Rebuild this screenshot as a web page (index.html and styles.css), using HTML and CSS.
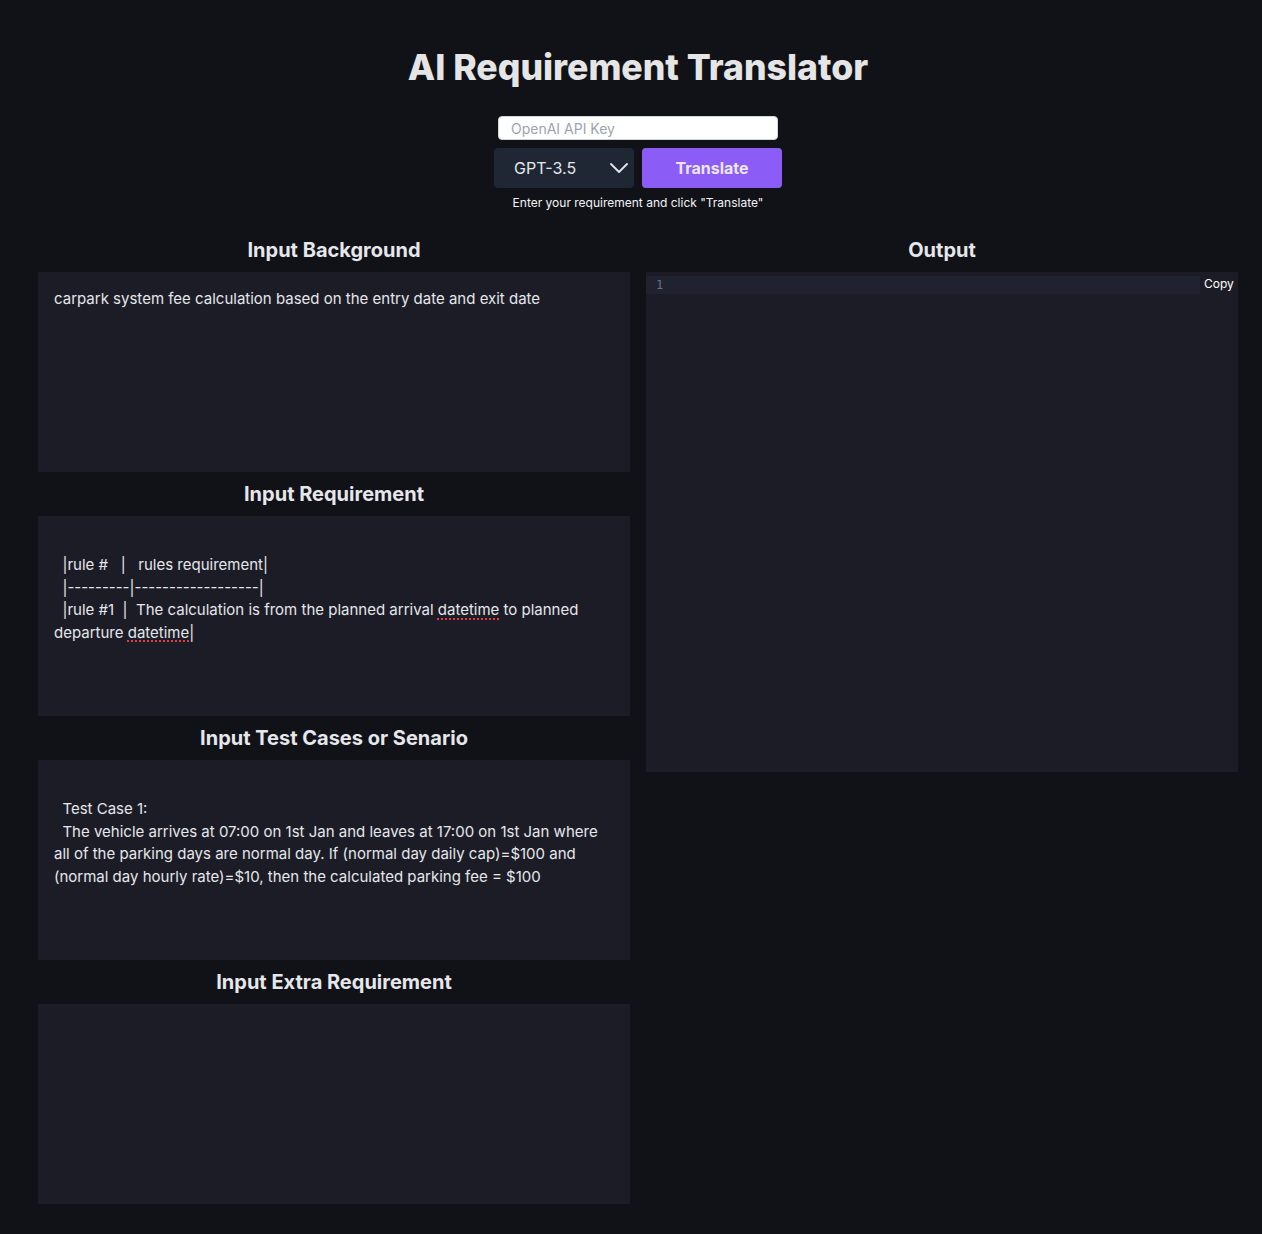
FILE: index.html
```html
<!DOCTYPE html>
<html lang="en">
<head>
<meta charset="utf-8">
<title>AI Requirement Translator</title>
<link rel="stylesheet" href="styles.css">
</head>
<body>
<div class="app">
  <header class="header">
    <h1 class="title">AI Requirement Translator</h1>
    <input class="api-key" type="text" placeholder="OpenAI API Key">
    <div class="controls">
      <div class="select">
        <span>GPT-3.5</span>
        <svg class="chevron" width="18" height="10" viewBox="0 0 18 10"><path d="M1 1l8 8 8-8" fill="none" stroke="#e5e7eb" stroke-width="1.8" stroke-linecap="round" stroke-linejoin="round"/></svg>
      </div>
      <button class="translate">Translate</button>
    </div>
    <p class="hint">Enter your requirement and click "Translate"</p>
  </header>
  <main class="columns">
    <section class="col">
      <h2 class="heading">Input Background</h2>
      <div class="box">carpark system fee calculation based on the entry date and exit date</div>
      <h2 class="heading">Input Requirement</h2>
      <div class="box">
  |rule #   |   rules requirement|
  |---------|------------------|
  |rule #1  |  The calculation is from the planned arrival <span class="spell">datetime</span> to planned departure <span class="spell">datetime</span>|</div>
      <h2 class="heading">Input Test Cases or Senario</h2>
      <div class="box">
  Test Case 1:
  The vehicle arrives at 07:00 on 1st Jan and leaves at 17:00 on 1st Jan where all of the parking days are normal day. If (normal day daily cap)=$100 and (normal day hourly rate)=$10, then the calculated parking fee = $100</div>
      <h2 class="heading">Input Extra Requirement</h2>
      <div class="box"></div>
    </section>
    <section class="col">
      <h2 class="heading">Output</h2>
      <div class="output">
        <div class="line">
          <span class="ln">1</span>
          <span class="code"></span>
          <span class="copy">Copy</span>
        </div>
      </div>
    </section>
  </main>
</div>
</body>
</html>
```

FILE: styles.css
```css
* { box-sizing: border-box; }
html, body { margin: 0; padding: 0; }
body {
  background: #111218;
  color: #e5e7eb;
  font-family: Inter, "Noto Sans", sans-serif;
}
.app {
  padding: 46px 24px 30px 38px;
}
.header {
  display: flex;
  flex-direction: column;
  align-items: center;
}
.title {
  margin: 0 0 26px;
  font-size: 35.6px;
  line-height: 44px;
  font-weight: 800;
  color: #e5e5e5;
}
.api-key {
  width: 280px;
  height: 24px;
  margin: 0 0 8px 0;
  border: 1px solid #d1d5db;
  border-radius: 4px;
  background: #fff;
  padding: 0 12px;
  font-family: Inter, sans-serif;
  font-size: 14px;
  color: #111;
  outline: none;
}
.api-key::placeholder { color: #9ca3af; }
.controls {
  display: flex;
  gap: 8px;
}
.select {
  width: 140px;
  height: 40px;
  background: #1f2735;
  border-radius: 4px;
  display: flex;
  align-items: center;
  justify-content: space-between;
  padding: 0 6px 0 20px;
  font-size: 16px;
  color: #e5e7eb;
}
.translate {
  width: 140px;
  height: 40px;
  border: none;
  border-radius: 4px;
  background: #8b5cf6;
  color: #ece6ff;
  font-family: Inter, sans-serif;
  font-size: 16px;
  font-weight: 700;
}
.hint {
  margin: 7px 0 0;
  font-size: 12px;
  line-height: 16px;
  color: #f3f4f6;
}
.columns {
  display: grid;
  grid-template-columns: 592px 592px;
  gap: 16px;
  margin-top: 17px;
}
.col { display: flex; flex-direction: column; }
.heading {
  margin: 8px 0;
  font-size: 20px;
  line-height: 28px;
  font-weight: 700;
  text-align: center;
  color: #e5e7eb;
}
.box {
  height: 200px;
  background: #1c1c26;
  padding: 16px;
  font-size: 15px;
  line-height: 22.4px;
  white-space: pre-wrap;
  color: #e5e7eb;
  overflow: hidden;
}
.spell {
  text-decoration: underline dotted #e53e3e;
  text-decoration-thickness: 2px;
  text-underline-offset: 3px;
}
.output {
  height: 500px;
  background: #1c1c26;
  padding-top: 4px;
}
.line {
  display: flex;
  height: 18px;
}
.ln {
  width: 20px;
  padding-left: 10px;
  box-sizing: content-box;
  background: #21222f;
  display: flex;
  align-items: center;
  font-family: "DejaVu Sans Mono", monospace;
  font-size: 12px;
  color: #6b7280;
}
.code {
  flex: 1;
  background: #21222f;
}
.copy {
  width: 38px;
  padding-left: 4px;
  font-size: 12px;
  line-height: 16px;
  color: #fff;
}
```
